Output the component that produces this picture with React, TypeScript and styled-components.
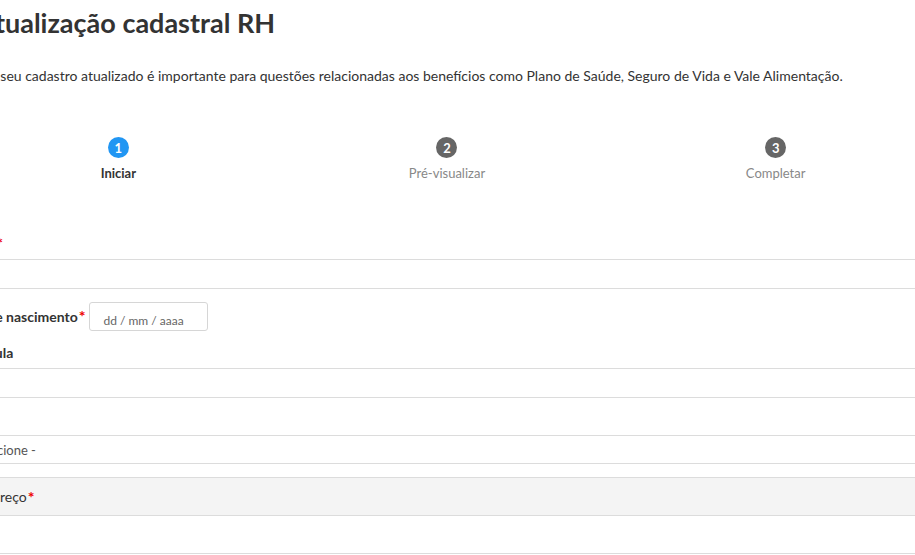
import React from 'react';
import styled, { createGlobalStyle } from 'styled-components';

const GlobalStyle = createGlobalStyle`
	html, body {
		margin: 0;
		padding: 0;
		background: #fff;
		overflow: hidden;
	}
	body {
		font-family: Lato, "Open Sans", sans-serif;
		color: #333;
	}
`;

const Page = styled.div`
	width: 986px;
	margin-left: -46px;
`;

const Header = styled.header`
	padding: 8px 0 0 23px;
`;

const Title = styled.h1`
	margin: 0;
	font-size: 27px;
	line-height: 30px;
	font-weight: 700;
	color: #333;
`;

const Lead = styled.p`
	margin: 28px 0 0 1px;
	font-size: 14px;
	line-height: 20px;
	color: #333;
`;

const Steps = styled.ol`
	list-style: none;
	margin: 51px 0 0;
	padding: 0;
	display: grid;
	grid-template-columns: repeat(3, 1fr);
`;

const Step = styled.li`
	display: flex;
	flex-direction: column;
	align-items: center;
	gap: 7px;
`;

const StepNumber = styled.span<{ $active?: boolean }>`
	width: 21px;
	height: 21px;
	border-radius: 50%;
	background: ${(p) => (p.$active ? '#2196f3' : '#666')};
	color: #fff;
	font-size: 13px;
	font-weight: 700;
	display: flex;
	align-items: center;
	justify-content: center;
`;

const StepLabel = styled.span<{ $active?: boolean }>`
	font-size: 13px;
	line-height: 16px;
	font-weight: ${(p) => (p.$active ? 700 : 400)};
	color: ${(p) => (p.$active ? '#333' : '#888')};
`;

const Form = styled.form`
	margin-top: 52px;
	display: flex;
	flex-direction: column;
`;

const Label = styled.label`
	font-size: 14px;
	font-weight: 700;
	line-height: 20px;
	color: #333;
`;

const Required = styled.span`
	color: #e00;
	font-size: 16px;
	font-weight: 700;
	margin-left: 1px;
`;

const TextInput = styled.input<{ $tall?: boolean }>`
	box-sizing: border-box;
	width: 100%;
	height: ${(p) => (p.$tall ? '39px' : '30px')};
	border: 1px solid #dcdcdc;
	border-radius: 3px;
	padding: 0 10px;
	font-family: inherit;
	font-size: 13px;
	background: #fff;
	outline: none;
`;

const Stacked = styled.div`
	display: flex;
	flex-direction: column;
	& > * + * {
		margin-top: -1px;
	}
`;

const Field = styled.div<{ $gap?: number; $top?: number }>`
	display: flex;
	flex-direction: column;
	gap: ${(p) => p.$gap ?? 5}px;
	margin-top: ${(p) => p.$top ?? 0}px;
`;

const InlineField = styled.div`
	display: flex;
	align-items: center;
	gap: 4px;
	margin-top: 13px;
`;

const DateBox = styled.div`
	box-sizing: border-box;
	width: 119px;
	height: 29px;
	border: 1px solid #d6d6d6;
	border-radius: 3px;
	padding: 10px 0 0 13px;
	font-size: 12px;
	color: #666;
`;

const Select = styled.div`
	box-sizing: border-box;
	height: 29px;
	border: 1px solid #dcdcdc;
	border-radius: 3px;
	padding: 0 10px;
	display: flex;
	align-items: center;
	font-size: 13px;
	color: #555;
`;

const Section = styled.div`
	box-sizing: border-box;
	margin-top: 13px;
	height: 39px;
	background: #f4f4f4;
	border-top: 1px solid #dcdcdc;
	border-bottom: 1px solid #dcdcdc;
	padding: 0 15px;
	display: flex;
	align-items: center;
	font-size: 14px;
	color: #333;
`;

const LastInput = styled(TextInput)`
	margin-top: -1px;
`;

const steps = ['Iniciar', 'Pré-visualizar', 'Completar'];

export default function App(): JSX.Element {
	return (
		<Page>
			<GlobalStyle />
			<Header>
				<Title>Atualização cadastral RH</Title>
				<Lead>
					Ter seu cadastro atualizado é importante para questões relacionadas aos benefícios como Plano de Saúde, Seguro de Vida e Vale Alimentação.
				</Lead>
			</Header>
			<Steps>
				{steps.map((s, i) => (
					<Step key={s}>
						<StepNumber $active={i === 0}>{i + 1}</StepNumber>
						<StepLabel $active={i === 0}>{s}</StepLabel>
					</Step>
				))}
			</Steps>
			<Form>
				<Field>
					<Label>
						Nome&nbsp;
						<Required>*</Required>
					</Label>
					<TextInput type="text" />
				</Field>
				<InlineField>
					<Label>
						Data de nascimento
						<Required>*</Required>
					</Label>
					<DateBox>dd / mm / aaaa</DateBox>
				</InlineField>
				<Field $top={12}>
					<Label>Matrícula</Label>
					<Stacked>
						<TextInput type="text" />
						<TextInput type="text" $tall />
						<Select>- Selecione -</Select>
					</Stacked>
				</Field>
				<Section>
					Endereço
					<Required>*</Required>
				</Section>
				<LastInput type="text" $tall />
			</Form>
		</Page>
	);
}
